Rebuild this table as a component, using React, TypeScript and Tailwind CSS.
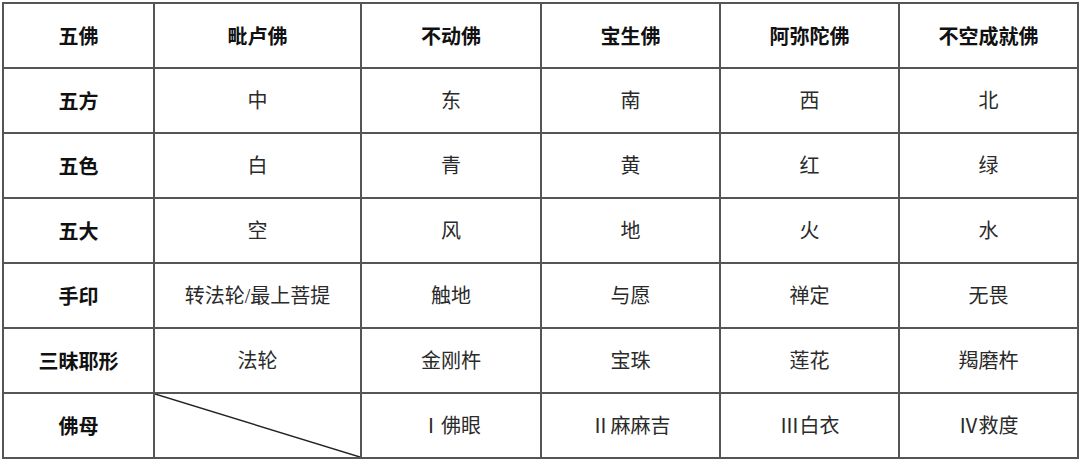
const header = ["五佛", "毗卢佛", "不动佛", "宝生佛", "阿弥陀佛", "不空成就佛"];

const rows: { label: string; cells: string[] }[] = [
  { label: "五方", cells: ["中", "东", "南", "西", "北"] },
  { label: "五色", cells: ["白", "青", "黄", "红", "绿"] },
  { label: "五大", cells: ["空", "风", "地", "火", "水"] },
  { label: "手印", cells: ["转法轮/最上菩提", "触地", "与愿", "禅定", "无畏"] },
  { label: "三昧耶形", cells: ["法轮", "金刚杵", "宝珠", "莲花", "羯磨杵"] },
];

const lastRow = ["Ⅰ佛眼", "Ⅱ麻麻吉", "Ⅲ白衣", "Ⅳ救度"];

const bold = "font-['Noto_Sans_CJK_SC',sans-serif] font-bold text-[20px] text-[#111]";
const body = "font-['Liberation_Serif','Noto_Sans_CJK_SC',serif] font-normal text-[20px] text-[#2a2a2a]";
const cell = "border-2 border-[#555] text-center align-middle h-[65px] p-0";

export default function App() {
  return (
    <div className="w-[1080px] h-[461px] bg-white pt-[2px] pl-[2px]">
      <table className="table-fixed border-collapse w-[1075px]">
        <colgroup>
          <col className="w-[151px]" />
          <col className="w-[207px]" />
          <col className="w-[180px]" />
          <col className="w-[179px]" />
          <col className="w-[179px]" />
          <col className="w-[179px]" />
        </colgroup>
        <tbody>
          {/* Header */}
          <tr>
            {header.map((h) => (
              <td key={h} className={`${cell} ${bold}`}>
                {h}
              </td>
            ))}
          </tr>

          {rows.map((r) => (
            <tr key={r.label}>
              <td className={`${cell} ${bold}`}>{r.label}</td>
              {r.cells.map((c, i) => (
                <td key={i} className={`${cell} ${body}`}>
                  {c}
                </td>
              ))}
            </tr>
          ))}

          {/* Last row with diagonal */}
          <tr>
            <td className={`${cell} ${bold}`}>佛母</td>
            <td className={`${cell} relative`}>
              <svg
                className="absolute inset-0 w-full h-full"
                viewBox="0 0 100 100"
                preserveAspectRatio="none"
              >
                <line
                  x1="0"
                  y1="0"
                  x2="100"
                  y2="100"
                  stroke="#222"
                  strokeWidth="1.5"
                  vectorEffect="non-scaling-stroke"
                />
              </svg>
            </td>
            {lastRow.map((c) => (
              <td key={c} className={`${cell} ${body}`}>
                {c}
              </td>
            ))}
          </tr>
        </tbody>
      </table>
    </div>
  );
}
